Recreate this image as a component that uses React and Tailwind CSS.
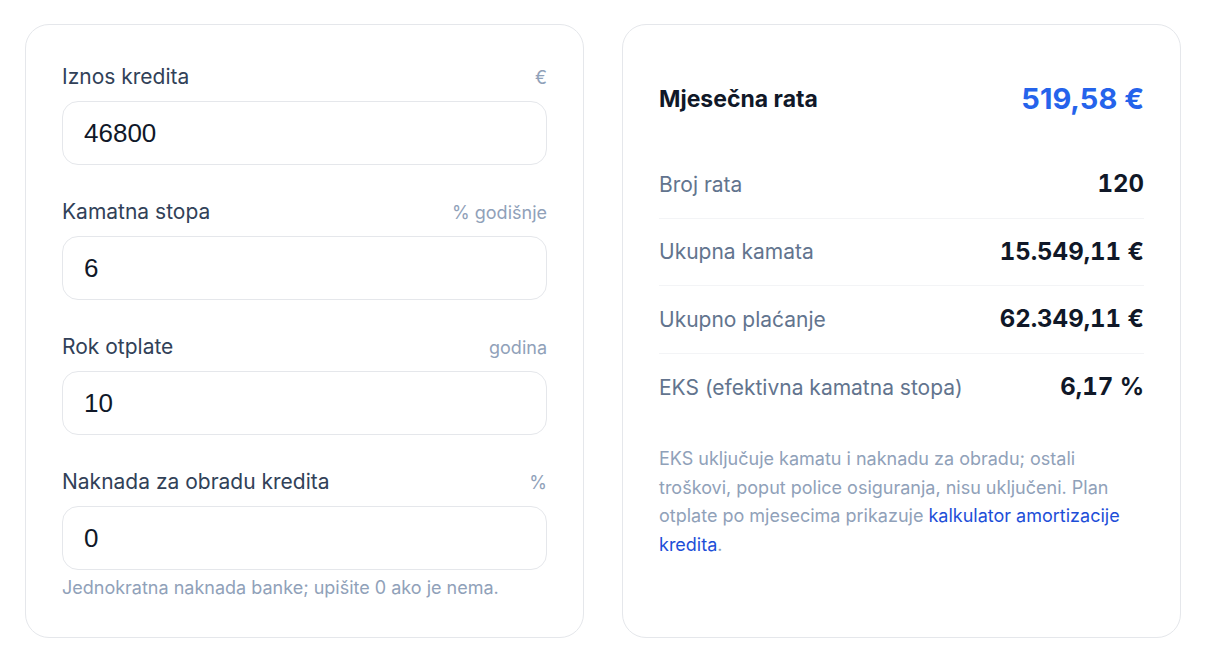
import React from "react";

const fields = [
  { label: "Iznos kredita", unit: "€", value: "46800" },
  { label: "Kamatna stopa", unit: "% godišnje", value: "6" },
  { label: "Rok otplate", unit: "godina", value: "10" },
  { label: "Naknada za obradu kredita", unit: "%", value: "0" },
];

const rows = [
  { label: "Broj rata", value: "120" },
  { label: "Ukupna kamata", value: "15.549,11 €" },
  { label: "Ukupno plaćanje", value: "62.349,11 €" },
  { label: "EKS (efektivna kamatna stopa)", value: "6,17 %" },
];

export default function App() {
  return (
    <div
      className="min-h-screen bg-white px-[25px] pt-[24px]"
      style={{ fontFamily: "Inter, 'Noto Sans', sans-serif" }}
    >
      <div className="grid grid-cols-2 gap-[38px]">
        {/* inputs */}
        <div className="h-[614px] rounded-[24px] border border-gray-200 px-[36px] pt-[36px]">
          {fields.map((f, idx) => (
            <div key={idx} className={idx > 0 ? "mt-[31px]" : ""}>
              <div className="flex h-[32px] items-center justify-between">
                <span className="text-[21px] text-slate-700">{f.label}</span>
                <span className="text-[18px] text-slate-400">{f.unit}</span>
              </div>
              <div className="mt-[8px] flex h-[64px] items-center rounded-[16px] border border-gray-200 px-[21px]">
                <input
                  readOnly
                  value={f.value}
                  className="w-full bg-transparent text-[26px] text-gray-900 outline-none"
                  style={{ fontFamily: "'Liberation Sans', Arial, sans-serif" }}
                />
              </div>
            </div>
          ))}
          <p className="mt-[4px] text-[18px] text-slate-400">
            Jednokratna naknada banke; upišite 0 ako je nema.
          </p>
        </div>

        {/* results */}
        <div className="h-[614px] rounded-[24px] border border-gray-200 px-[36px] pt-[55px]">
          <div className="flex h-[38px] items-center justify-between">
            <span className="text-[23px] font-bold text-gray-900">Mjesečna rata</span>
            <span className="text-[29px] font-bold text-[#2563eb]">519,58 €</span>
          </div>
          <div className="mt-[33px]">
            {rows.map((r, idx) => (
              <div
                key={idx}
                className={`flex h-[67.5px] items-center justify-between ${
                  idx < rows.length - 1 ? "border-b border-gray-100" : ""
                }`}
              >
                <span className="text-[21px] text-slate-500">{r.label}</span>
                <span className="text-[24px] font-bold tabular-nums text-gray-900">{r.value}</span>
              </div>
            ))}
          </div>
          <p className="mt-[24px] text-[18px] leading-[28.7px] text-slate-400">
            EKS uključuje kamatu i naknadu za obradu; ostali troškovi, poput police
            osiguranja, nisu uključeni. Plan otplate po mjesecima prikazuje{" "}
            <a href="#" className="text-[#1d4ed8]">
              kalkulator amortizacije kredita
            </a>
            .
          </p>
        </div>
      </div>
    </div>
  );
}
